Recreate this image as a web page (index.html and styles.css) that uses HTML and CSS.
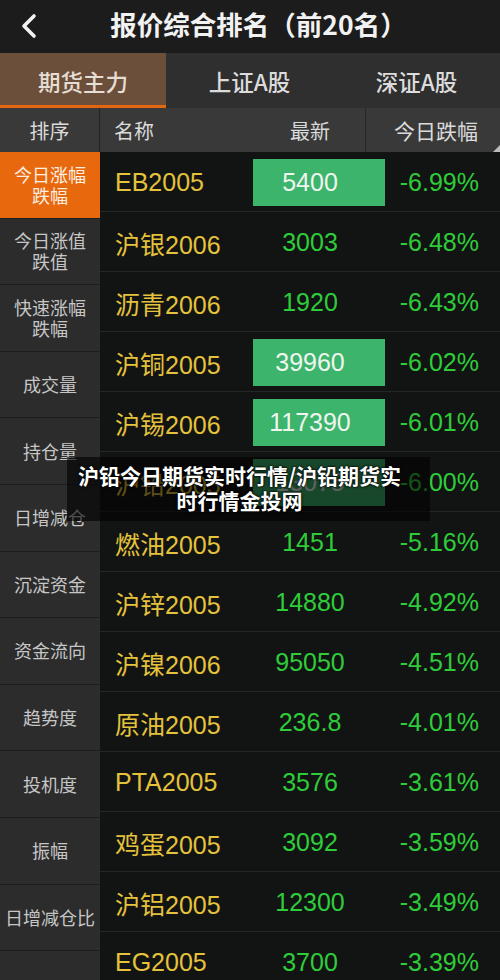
FILE: index.html
```html
<!DOCTYPE html>
<html lang="zh-CN">
<head>
<meta charset="utf-8">
<title>报价综合排名</title>
<link rel="stylesheet" href="styles.css">
</head>
<body>
<div class="app">
  <header class="topbar">
    <svg class="back" width="20" height="26" viewBox="0 0 20 26"><path d="M15 3 L5 13 L15 23" fill="none" stroke="#f2f2f2" stroke-width="3.6" stroke-linecap="round" stroke-linejoin="round"/></svg>
    <h1 class="title">报价综合排名（前20名）</h1>
  </header>
  <nav class="tabs">
    <div class="tab active">期货主力</div>
    <div class="tab">上证A股</div>
    <div class="tab">深证A股</div>
  </nav>
  <div class="colhead">
    <div class="ch-sort">排序</div>
    <div class="ch-mid">
      <span class="ch-name">名称</span>
      <span class="ch-price">最新</span>
    </div>
    <div class="ch-pct">今日跌幅<span class="corner"></span></div>
  </div>
  <div class="body">
    <aside class="side">
      <div class="side-item active">今日涨幅<br>跌幅</div>
      <div class="side-item">今日涨值<br>跌值</div>
      <div class="side-item">快速涨幅<br>跌幅</div>
      <div class="side-item">成交量</div>
      <div class="side-item">持仓量</div>
      <div class="side-item">日增减仓</div>
      <div class="side-item">沉淀资金</div>
      <div class="side-item">资金流向</div>
      <div class="side-item">趋势度</div>
      <div class="side-item">投机度</div>
      <div class="side-item">振幅</div>
      <div class="side-item">日增减仓比</div>
      <div class="side-item last"></div>
    </aside>
    <main class="list">
      <div class="row"><span class="name">EB2005</span><span class="price hl">5400</span><span class="pct">-6.99%</span></div>
      <div class="row"><span class="name">沪银2006</span><span class="price">3003</span><span class="pct">-6.48%</span></div>
      <div class="row"><span class="name">沥青2006</span><span class="price">1920</span><span class="pct">-6.43%</span></div>
      <div class="row"><span class="name">沪铜2005</span><span class="price hl">39960</span><span class="pct">-6.02%</span></div>
      <div class="row"><span class="name">沪锡2006</span><span class="price hl">117390</span><span class="pct">-6.01%</span></div>
      <div class="row"><span class="name">沪铅2005</span><span class="price hl">13075</span><span class="pct">-6.00%</span></div>
      <div class="row"><span class="name">燃油2005</span><span class="price">1451</span><span class="pct">-5.16%</span></div>
      <div class="row"><span class="name">沪锌2005</span><span class="price">14880</span><span class="pct">-4.92%</span></div>
      <div class="row"><span class="name">沪镍2006</span><span class="price">95050</span><span class="pct">-4.51%</span></div>
      <div class="row"><span class="name">原油2005</span><span class="price">236.8</span><span class="pct">-4.01%</span></div>
      <div class="row"><span class="name">PTA2005</span><span class="price">3576</span><span class="pct">-3.61%</span></div>
      <div class="row"><span class="name">鸡蛋2005</span><span class="price">3092</span><span class="pct">-3.59%</span></div>
      <div class="row"><span class="name">沪铝2005</span><span class="price">12300</span><span class="pct">-3.49%</span></div>
      <div class="row"><span class="name">EG2005</span><span class="price">3700</span><span class="pct">-3.39%</span></div>
    </main>
  </div>
  <div class="caption">沪铅今日期货实时行情/沪铅期货实<br>时行情金投网</div>
</div>
</body>
</html>
```

FILE: styles.css
```css
html, body {
  margin: 0;
  padding: 0;
  background: #121413;
}
.app {
  position: relative;
  width: 500px;
  height: 980px;
  overflow: hidden;
  font-family: "Noto Sans CJK SC", "Noto Sans", sans-serif;
  background: #121413;
}
.topbar {
  height: 53px;
  background: #1c1c1c;
  display: flex;
  align-items: center;
}
.back {
  margin-left: 19px;
  margin-top: -2px;
  flex: none;
}
.title {
  margin: 0;
  flex: 1;
  text-align: center;
  font-size: 26.5px;
  font-weight: 700;
  color: #f2f2f2;
  padding-right: 22px;
  line-height: 48px;
  padding-bottom: 5px;
}
.tabs {
  display: grid;
  grid-template-columns: 166px 167px 167px;
  height: 55px;
  background: #2f2f2f;
}
.tab {
  display: flex;
  align-items: center;
  justify-content: center;
  font-size: 22.5px;
  font-weight: 500;
  color: #dcdcdc;
  box-sizing: border-box;
}
.tab.active {
  background: #6c4f3a;
  border-bottom: 3px solid #e2670f;
  color: #e6ddd4;
  padding-top: 3px;
}
.colhead {
  display: flex;
  height: 44px;
  background: #393939;
  color: #dadada;
  font-size: 20px;
}
.ch-sort {
  width: 99px;
  border-right: 1px solid #232323;
  display: flex;
  align-items: center;
  justify-content: center;
}
.ch-mid {
  width: 265px;
  display: grid;
  grid-template-columns: 153px 114px;
  align-items: center;
}
.ch-name {
  padding-left: 14px;
}
.ch-price {
  text-align: center;
}
.ch-pct {
  flex: 1;
  border-left: 1px solid #262626;
  display: flex;
  align-items: center;
  justify-content: flex-end;
  padding-right: 22px;
  position: relative;
  font-size: 21px;
}
.corner {
  position: absolute;
  right: 0;
  bottom: 0;
  width: 0;
  height: 0;
  border-left: 7px solid transparent;
  border-bottom: 7px solid #bdbdbd;
}
.body {
  display: flex;
}
.side {
  width: 100px;
  flex: none;
  background: #2c2c2c;
  display: flex;
  flex-direction: column;
}
.side-item {
  height: 66.6px;
  box-sizing: border-box;
  border-bottom: 1px solid #1d1d1d;
  display: flex;
  align-items: center;
  justify-content: center;
  text-align: center;
  font-size: 18px;
  line-height: 21px;
  color: #c6c6c6;
}
.side-item.active {
  background: #e8680d;
  color: #fbeee2;
}
.list {
  flex: 1;
  background: #121413;
}
.row {
  height: 60px;
  box-sizing: border-box;
  padding-top: 2px;
  border-bottom: 1px solid #252726;
  display: grid;
  grid-template-columns: 153px 132px 1fr;
  align-items: center;
  font-family: "Liberation Sans", "Noto Sans CJK SC", sans-serif;
  font-size: 25px;
}
.name {
  padding-left: 15px;
  color: #e4c23c;
  white-space: nowrap;
}
.price {
  color: #2fcc3a;
  text-align: center;
  padding-right: 18px;
  height: 47px;
  line-height: 47px;
}
.price.hl {
  background: #3db46b;
  color: #eef6ef;
}
.pct {
  color: #2fcc3a;
  text-align: right;
  padding-right: 21px;
}
.caption {
  position: absolute;
  left: 67px;
  top: 457px;
  width: 363px;
  height: 64px;
  box-sizing: border-box;
  padding: 6px 26px 0 8px;
  background: rgba(0, 0, 0, 0.6);
  color: #ffffff;
  font-size: 21px;
  font-weight: 700;
  line-height: 25px;
  text-align: center;
  white-space: nowrap;
  text-shadow: 0 0 3px #000, 0 0 2px #000;
}
```
